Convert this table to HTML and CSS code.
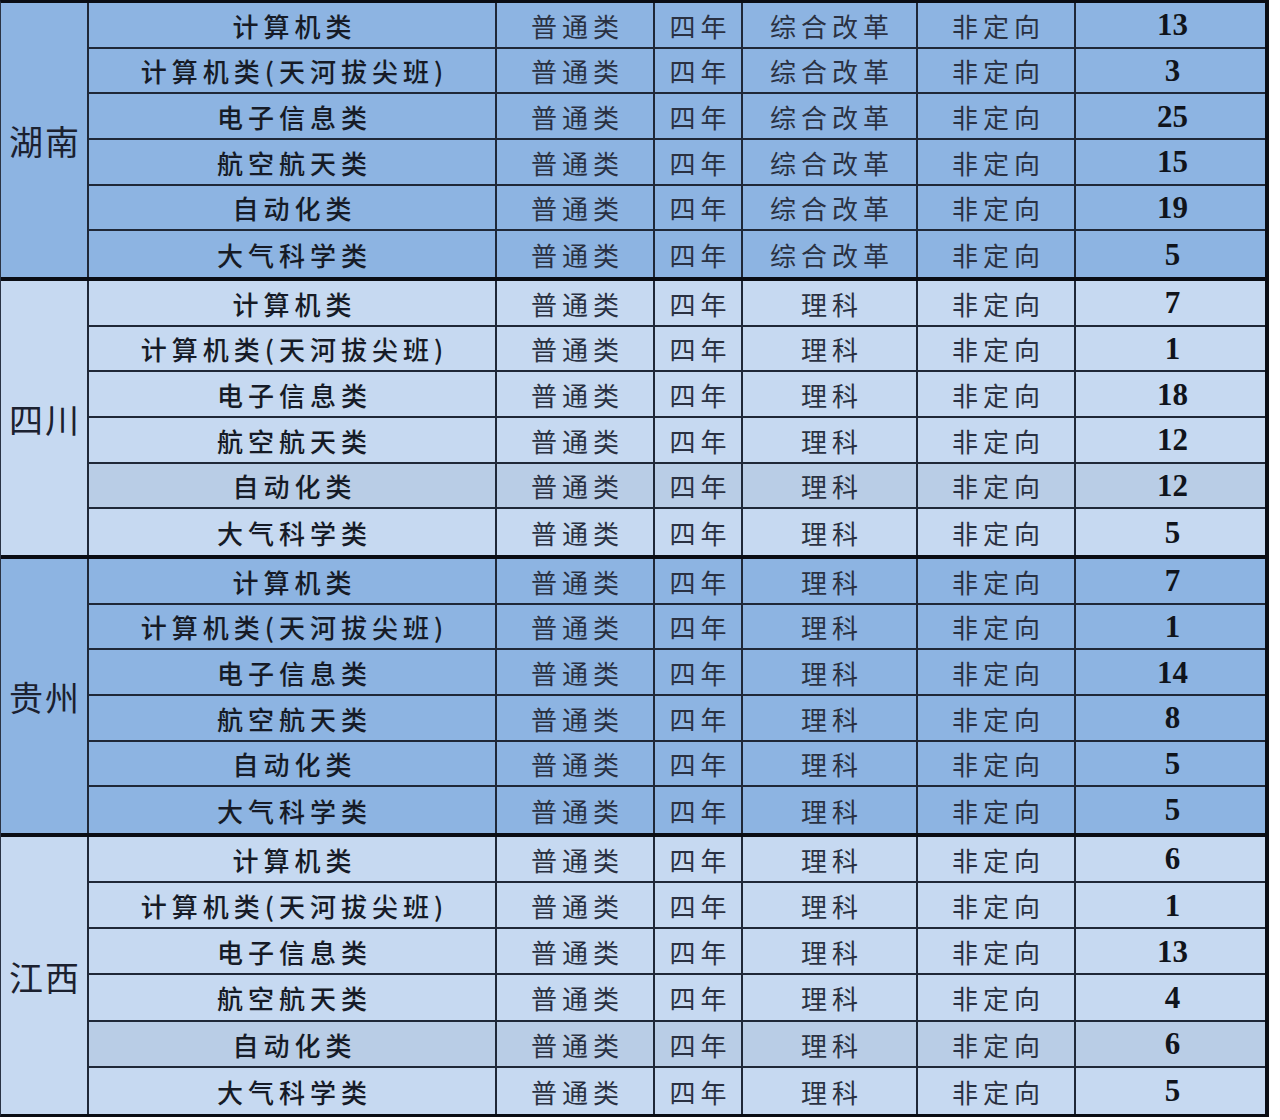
FILE: index.html
```html
<!DOCTYPE html>
<html lang="zh-CN">
<head>
<meta charset="utf-8">
<title>招生计划</title>
<link rel="stylesheet" href="styles.css">
</head>
<body>
<div class="sheet">
  <div class="grp dark">
    <div class="prov">湖南</div>
    <div class="row"><div class="c major">计算机类</div><div class="c">普通类</div><div class="c">四年</div><div class="c">综合改革</div><div class="c">非定向</div><div class="c num">13</div></div>
    <div class="row"><div class="c major">计算机类(天河拔尖班)</div><div class="c">普通类</div><div class="c">四年</div><div class="c">综合改革</div><div class="c">非定向</div><div class="c num">3</div></div>
    <div class="row"><div class="c major">电子信息类</div><div class="c">普通类</div><div class="c">四年</div><div class="c">综合改革</div><div class="c">非定向</div><div class="c num">25</div></div>
    <div class="row"><div class="c major">航空航天类</div><div class="c">普通类</div><div class="c">四年</div><div class="c">综合改革</div><div class="c">非定向</div><div class="c num">15</div></div>
    <div class="row"><div class="c major">自动化类</div><div class="c">普通类</div><div class="c">四年</div><div class="c">综合改革</div><div class="c">非定向</div><div class="c num">19</div></div>
    <div class="row"><div class="c major">大气科学类</div><div class="c">普通类</div><div class="c">四年</div><div class="c">综合改革</div><div class="c">非定向</div><div class="c num">5</div></div>
  </div>
  <div class="grp light">
    <div class="prov">四川</div>
    <div class="row"><div class="c major">计算机类</div><div class="c">普通类</div><div class="c">四年</div><div class="c">理科</div><div class="c">非定向</div><div class="c num">7</div></div>
    <div class="row"><div class="c major">计算机类(天河拔尖班)</div><div class="c">普通类</div><div class="c">四年</div><div class="c">理科</div><div class="c">非定向</div><div class="c num">1</div></div>
    <div class="row"><div class="c major">电子信息类</div><div class="c">普通类</div><div class="c">四年</div><div class="c">理科</div><div class="c">非定向</div><div class="c num">18</div></div>
    <div class="row"><div class="c major">航空航天类</div><div class="c">普通类</div><div class="c">四年</div><div class="c">理科</div><div class="c">非定向</div><div class="c num">12</div></div>
    <div class="row alt"><div class="c major">自动化类</div><div class="c">普通类</div><div class="c">四年</div><div class="c">理科</div><div class="c">非定向</div><div class="c num">12</div></div>
    <div class="row"><div class="c major">大气科学类</div><div class="c">普通类</div><div class="c">四年</div><div class="c">理科</div><div class="c">非定向</div><div class="c num">5</div></div>
  </div>
  <div class="grp dark">
    <div class="prov">贵州</div>
    <div class="row"><div class="c major">计算机类</div><div class="c">普通类</div><div class="c">四年</div><div class="c">理科</div><div class="c">非定向</div><div class="c num">7</div></div>
    <div class="row"><div class="c major">计算机类(天河拔尖班)</div><div class="c">普通类</div><div class="c">四年</div><div class="c">理科</div><div class="c">非定向</div><div class="c num">1</div></div>
    <div class="row"><div class="c major">电子信息类</div><div class="c">普通类</div><div class="c">四年</div><div class="c">理科</div><div class="c">非定向</div><div class="c num">14</div></div>
    <div class="row"><div class="c major">航空航天类</div><div class="c">普通类</div><div class="c">四年</div><div class="c">理科</div><div class="c">非定向</div><div class="c num">8</div></div>
    <div class="row"><div class="c major">自动化类</div><div class="c">普通类</div><div class="c">四年</div><div class="c">理科</div><div class="c">非定向</div><div class="c num">5</div></div>
    <div class="row"><div class="c major">大气科学类</div><div class="c">普通类</div><div class="c">四年</div><div class="c">理科</div><div class="c">非定向</div><div class="c num">5</div></div>
  </div>
  <div class="grp light">
    <div class="prov">江西</div>
    <div class="row"><div class="c major">计算机类</div><div class="c">普通类</div><div class="c">四年</div><div class="c">理科</div><div class="c">非定向</div><div class="c num">6</div></div>
    <div class="row"><div class="c major">计算机类(天河拔尖班)</div><div class="c">普通类</div><div class="c">四年</div><div class="c">理科</div><div class="c">非定向</div><div class="c num">1</div></div>
    <div class="row"><div class="c major">电子信息类</div><div class="c">普通类</div><div class="c">四年</div><div class="c">理科</div><div class="c">非定向</div><div class="c num">13</div></div>
    <div class="row"><div class="c major">航空航天类</div><div class="c">普通类</div><div class="c">四年</div><div class="c">理科</div><div class="c">非定向</div><div class="c num">4</div></div>
    <div class="row alt"><div class="c major">自动化类</div><div class="c">普通类</div><div class="c">四年</div><div class="c">理科</div><div class="c">非定向</div><div class="c num">6</div></div>
    <div class="row"><div class="c major">大气科学类</div><div class="c">普通类</div><div class="c">四年</div><div class="c">理科</div><div class="c">非定向</div><div class="c num">5</div></div>
  </div>
</div>
</body>
</html>
```
FILE: styles.css
```css
html, body {
  margin: 0;
  padding: 0;
  background: #ffffff;
}

.sheet {
  width: 1269px;
  box-sizing: border-box;
  border-top: 3px solid #0a0d14;
  border-right: 4px solid #0a0d14;
  border-bottom: 3px solid #0a0d14;
  border-left: 1px solid #2a3344;
  display: flex;
  flex-direction: column;
  color: #1b2130;
  font-family: "Noto Sans CJK SC", sans-serif;
}

.grp {
  display: grid;
  grid-template-columns: 88px 1fr;
  grid-template-rows: repeat(6, 45.67px);
  border-bottom: 4px solid #0a0d14;
}

.grp:last-child {
  border-bottom: none;
  grid-template-rows: repeat(6, 46.2px);
}

.dark { background: #8db4e2; }
.light { background: #c6d9f1; }
.light .row.alt { background: #b9cde6; }

.prov {
  grid-row: 1 / span 6;
  grid-column: 1;
  border-right: 2px solid #1f2838;
  display: flex;
  align-items: center;
  justify-content: center;
  font-size: 34px;
  letter-spacing: 2px;
  padding-left: 2px;
  padding-top: 2px;
}

.row {
  grid-column: 2;
  display: grid;
  grid-template-columns: 408px 158px 88px 175px 158px 1fr;
  border-bottom: 2px solid #1f2838;
  box-sizing: border-box;
}

.row:nth-child(7) {
  border-bottom: none;
}

.c {
  display: flex;
  align-items: center;
  justify-content: center;
  font-size: 26px;
  letter-spacing: 5px;
  padding-left: 5px;
  padding-top: 2px;
  border-right: 2px solid #1f2838;
  box-sizing: border-box;
  line-height: 1;
  color: #2a3142;
}

.c:last-child {
  border-right: none;
}

.major {
  font-weight: 500;
  color: #161b27;
}

.num {
  font-family: "Liberation Serif", "Times New Roman", serif;
  font-weight: 700;
  font-size: 31px;
  letter-spacing: 0;
  padding-left: 4px;
  padding-top: 0;
  padding-bottom: 0;
  color: #10141c;
}
```
